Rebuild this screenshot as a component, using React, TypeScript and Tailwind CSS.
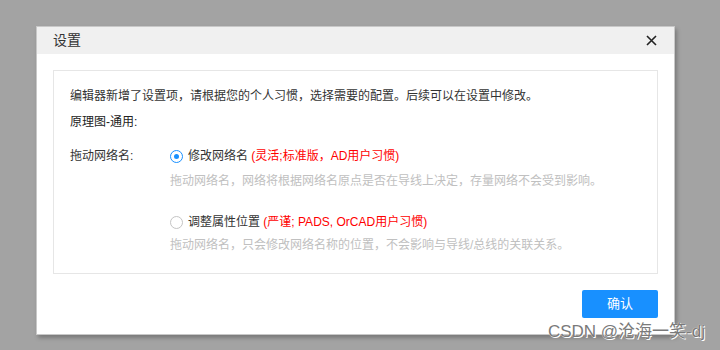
import React from "react";

function Radio({ checked }: { checked?: boolean }) {
  return (
    <span
      className={
        "flex h-[13px] w-[13px] shrink-0 items-center justify-center rounded-full border bg-white " +
        (checked ? "border-[#1890ff]" : "border-[#c4c4c4]")
      }
    >
      {checked && <span className="h-[5px] w-[5px] rounded-full bg-[#1890ff]" />}
    </span>
  );
}

export default function App() {
  const font = { fontFamily: '"Liberation Sans", "Noto Sans CJK SC", sans-serif' };
  return (
    <div className="relative h-[350px] w-[720px] overflow-hidden bg-[#a3a3a3]" style={font}>
      <div className="pt-[26px] pl-[36px]">
        <div className="flex h-[309px] w-[639px] flex-col border border-[#c8c8c8] bg-white shadow-[2px_3px_4px_rgba(0,0,0,0.25)]">
          <div className="flex h-[29px] items-center justify-between bg-[#f0f0f0] pl-4 pr-[16px]">
            <span className="text-[14px] text-[#333]">设置</span>
            <svg width="11" height="11" viewBox="0 0 11 11" className="mr-[1px]">
              <path d="M1 1L10 10M10 1L1 10" stroke="#222" strokeWidth="1.6" />
            </svg>
          </div>
          <div className="flex flex-1 flex-col px-4 pt-4 pb-4">
            <div className="h-[204px] border border-[#e6e6e6] pl-4 pt-[15px] text-[12px] text-[#333]">
              <p className="leading-5">
                编辑器新增了设置项，请根据您的个人习惯，选择需要的配置。后续可以在设置中修改。
              </p>
              <p className="mt-[6px] leading-5 text-[#222]">原理图-通用:</p>
              <div className="mt-[14px] flex">
                <div className="w-[100px] shrink-0 leading-5">拖动网络名:</div>
                <div className="flex flex-col">
                  <div className="flex items-center gap-[5px] leading-5">
                    <Radio checked />
                    <span className="text-[#333]">
                      修改网络名 <span className="text-[#ff0000]">(灵活;标准版，AD用户习惯)</span>
                    </span>
                  </div>
                  <div className="mt-[5px] leading-5 text-[#c0c0c0]">
                    拖动网络名，网络将根据网络名原点是否在导线上决定，存量网络不会受到影响。
                  </div>
                  <div className="mt-[21px] flex items-center gap-[5px] leading-5">
                    <Radio />
                    <span className="text-[#333]">
                      调整属性位置 <span className="text-[#ff0000]">(严谨; PADS, OrCAD用户习惯)</span>
                    </span>
                  </div>
                  <div className="mt-[3px] leading-5 text-[#c0c0c0]">
                    拖动网络名，只会修改网络名称的位置，不会影响与导线/总线的关联关系。
                  </div>
                </div>
              </div>
            </div>
            <div className="mt-[16px] flex justify-end">
              <button className="h-[28px] w-[76px] rounded-[2px] bg-[#1890ff] text-[13px] text-white">
                确认
              </button>
            </div>
          </div>
        </div>
      </div>
      <div className="pointer-events-none absolute right-[15px] top-[322px] text-[17px] leading-5 text-[#7a7a7a] [text-shadow:0_0_1px_#fff,1px_1px_0_#fff]">
        CSDN @沧海一笑-dj
      </div>
    </div>
  );
}
